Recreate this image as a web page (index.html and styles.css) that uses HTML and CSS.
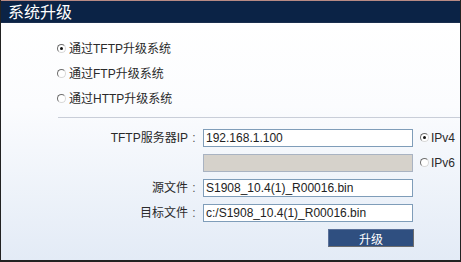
FILE: index.html
```html
<!DOCTYPE html>
<html lang="zh-CN">
<head>
  <meta charset="UTF-8" />
  <title>系统升级</title>
  <link rel="stylesheet" href="styles.css">
</head>
<body>
  <div class="panel">
    <!-- Заголовок -->
    <div class="title">系统升级</div>

    <div class="content">
      <!-- Способ обновления -->
      <ul class="modes">
        <li><span class="radio checked"></span>通过TFTP升级系统</li>
        <li><span class="radio"></span>通过FTP升级系统</li>
        <li><span class="radio"></span>通过HTTP升级系统</li>
      </ul>

      <div class="sep"></div>

      <!-- Форма -->
      <div class="form">
        <div class="label">TFTP服务器IP<span class="colon">:</span></div>
        <div class="field">192.168.1.100</div>
        <div class="ipver"><span class="radio checked"></span>IPv4</div>

        <div class="label"></div>
        <div class="field disabled"></div>
        <div class="ipver"><span class="radio"></span>IPv6</div>

        <div class="label">源文件<span class="colon">:</span></div>
        <div class="field">S1908_10.4(1)_R00016.bin</div>
        <div></div>

        <div class="label">目标文件<span class="colon">:</span></div>
        <div class="field">c:/S1908_10.4(1)_R00016.bin</div>
        <div></div>

        <div></div>
        <div class="actions"><button class="btn">升级</button></div>
        <div></div>
      </div>
    </div>
  </div>
</body>
</html>
```

FILE: styles.css
```css
* {
  margin: 0;
  padding: 0;
  box-sizing: border-box;
}

body {
  font-family: "Liberation Sans", Arial, "Noto Sans CJK SC", sans-serif;
  font-size: 12px;
  color: #2a2a2a;
  background: #fff;
}

.panel {
  width: 461px;
  height: 262px;
  display: flex;
  flex-direction: column;
  border-left: 1px solid #222;
  border-right: 1px solid #222;
  border-bottom: 2px solid #222;
}

/* Заголовок */
.title {
  height: 23px;
  border-top: 1px solid #b88a84;
  background-color: #0b2346;
  color: #fff;
  font-size: 16px;
  line-height: 21px;
  padding-left: 7px;
  font-family: "Noto Sans CJK SC", sans-serif;
  border-bottom: 1px solid #1a2e4e;
}

.content {
  flex: 1;
  background: linear-gradient(#ffffff 0%, #fbfcfe 35%, #e3ebf6 100%);
}

/* Переключатели */
.radio {
  display: inline-block;
  width: 9px;
  height: 9px;
  border-radius: 50%;
  border: 1px solid;
  border-color: #6e6e6e #d8d8d8 #d8d8d8 #6e6e6e;
  background: #fff;
  margin-right: 3px;
  position: relative;
  top: -1px;
  vertical-align: middle;
}

.radio.checked::after {
  content: "";
  position: absolute;
  left: 2px;
  top: 2px;
  width: 3px;
  height: 3px;
  border-radius: 50%;
  background: #111;
}

.modes {
  list-style: none;
  padding: 14px 0 0 56px;
}

.modes li {
  height: 25px;
  line-height: 25px;
}

.sep {
  margin: 5px 0 0 57px;
  border-top: 1px solid #c9ced8;
}

/* Форма */
.form {
  display: grid;
  grid-template-columns: 202px 210px 1fr;
  row-gap: 7px;
  margin-top: 11px;
}

.label {
  height: 18px;
  line-height: 18px;
  text-align: right;
  padding-right: 4px;
}

.colon {
  display: inline-block;
  width: 10px;
  text-align: center;
  color: #555;
  margin-left: 1px;
}

.field {
  height: 18px;
  line-height: 16px;
  border: 1px solid #7f9db9;
  background: #fff;
  padding-left: 2px;
  color: #222;
}

.field.disabled {
  background: #d6d2cb;
  border-color: #a9b3c2;
}

.ipver {
  height: 18px;
  line-height: 18px;
  padding-left: 7px;
}

.ipver .radio {
  margin-right: 2px;
}

.actions {
  display: flex;
  justify-content: flex-end;
}

.btn {
  width: 86px;
  height: 18px;
  background-color: #2f4f80;
  color: #fff;
  font-family: "Noto Sans CJK SC", sans-serif;
  font-size: 12px;
  border: 1px solid;
  border-color: #5a7099 #6d6d6d #6d6d6d #5a7099;
  margin-right: -1px;
}
```
